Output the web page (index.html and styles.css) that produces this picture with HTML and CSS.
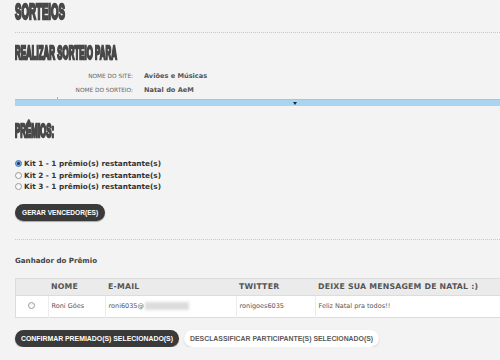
FILE: index.html
```html
<!DOCTYPE html>
<html lang="pt-BR">
<head>
    <meta charset="UTF-8">
    <meta name="viewport" content="width=device-width, initial-scale=1.0">
    <title>Sorteios</title>
    <link rel="stylesheet" href="styles.css">
</head>
<body>
    <div class="page">
        <div class="page-title">
            <h1 class="gothic big">SORTEIOS</h1>
        </div>

        <h2 class="gothic">REALIZAR SORTEIO PARA</h2>
        <div class="info">
            <div class="info-label">NOME DO SITE:</div>
            <div class="info-value">Aviões e Músicas</div>
            <div class="info-label">NOME DO SORTEIO:</div>
            <div class="info-value">Natal do AeM</div>
        </div>
        <div class="select-bar"><span class="caret"></span></div>

        <h2 class="gothic prizes-title">PRÊMIOS:</h2>
        <div class="prizes">
            <label class="prize"><input type="radio" name="kit" checked> Kit 1 - 1 prêmio(s) restantante(s)</label>
            <label class="prize"><input type="radio" name="kit"> Kit 2 - 1 prêmio(s) restantante(s)</label>
            <label class="prize"><input type="radio" name="kit"> Kit 3 - 1 prêmio(s) restantante(s)</label>
        </div>
        <button class="btn dark">GERAR VENCEDOR(ES)</button>

        <div class="winner">
            <div class="winner-title">Ganhador do Prêmio</div>
            <table class="winners">
                <thead>
                    <tr>
                        <th class="col-pick"></th>
                        <th class="col-name">NOME</th>
                        <th class="col-mail">E-MAIL</th>
                        <th class="col-tw">TWITTER</th>
                        <th>DEIXE SUA MENSAGEM DE NATAL :)</th>
                    </tr>
                </thead>
                <tbody>
                    <tr>
                        <td class="col-pick"><input type="radio" name="winner"></td>
                        <td>Roni Góes</td>
                        <td>roni6035@<span class="hidden-mail"></span></td>
                        <td>ronigoes6035</td>
                        <td>Feliz Natal pra todos!!</td>
                    </tr>
                </tbody>
            </table>
            <div class="actions">
                <button class="btn dark">CONFIRMAR PREMIADO(S) SELECIONADO(S)</button>
                <button class="btn light">DESCLASSIFICAR PARTICIPANTE(S) SELECIONADO(S)</button>
            </div>
        </div>
    </div>
</body>
</html>
```

FILE: styles.css
```css
/* Global */
body {
    margin: 0;
    background: #f3f3f3;
    color: #444;
    font-family: "DejaVu Sans", Verdana, sans-serif;
    overflow: hidden;
}

button {
    font-family: inherit;
    border: none;
    outline: none;
    cursor: pointer;
}

.page {
    padding: 1px 0 0 15px;
}

/* Headings */
.gothic {
    margin: 0;
    font-family: "Liberation Sans", Arial, sans-serif;
    font-weight: bold;
    color: #484848;
    display: inline-block;
    transform: scaleX(0.44);
    transform-origin: left center;
    -webkit-text-stroke: 2.4px #484848;
    white-space: nowrap;
}

h2.gothic {
    display: block;
    margin-top: 11px;
    font-size: 18px;
    line-height: 18px;
    height: 18px;
    width: 240px;
}

.big {
    font-size: 22px;
    line-height: 22px;
    height: 22px;
}

.page-title {
    padding-bottom: 9px;
    border-bottom: 1px dotted #c8c8c8;
}

/* Site info */
.info {
    display: grid;
    grid-template-columns: 118px auto;
    column-gap: 11px;
    margin-top: 7px;
}

.info-label,
.info-value {
    height: 14px;
    line-height: 14px;
}

.info-label {
    text-align: right;
    font-size: 5.8px;
    color: #666;
}

.info-value {
    font-size: 6.6px;
    font-weight: bold;
    color: #555;
}

.select-bar {
    position: relative;
    display: flex;
    align-items: center;
    height: 7px;
    margin-top: 2px;
    background: #a9d5f1;
    border-top: 1px solid #9cc8e6;
    box-sizing: border-box;
}

.select-bar::before {
    content: "";
    position: absolute;
    left: 42px;
    top: -3px;
    width: 1px;
    height: 2px;
    background: #aaa;
}

.caret {
    margin-left: 278px;
    width: 0;
    height: 0;
    border-left: 2.5px solid transparent;
    border-right: 2.5px solid transparent;
    border-top: 3px solid #1d2a44;
}

/* Prizes */
h2.prizes-title {
    margin-top: 16px;
}

.prizes {
    margin-top: 18px;
}

.prize {
    display: flex;
    align-items: center;
    gap: 2px;
    height: 11.5px;
    font-size: 7.3px;
    font-weight: bold;
    color: #333;
}

input[type="radio"] {
    appearance: none;
    -webkit-appearance: none;
    margin: 0;
    width: 7px;
    height: 7px;
    border-radius: 50%;
    border: 1px solid #9a9a9a;
    background: linear-gradient(#f4f4f4, #ffffff);
    box-sizing: border-box;
}

input[type="radio"]:checked {
    border-color: #3a6fb4;
    background: radial-gradient(circle, #1f3e6a 0 1.3px, #6ea8e6 1.6px, #a6cdf3 100%);
}

/* Buttons */
.btn {
    height: 17px;
    padding: 0 6px;
    border-radius: 9px;
    font-family: "Liberation Sans", Arial, sans-serif;
    font-weight: bold;
    font-size: 6.9px;
    white-space: nowrap;
}

.btn.dark {
    background: #3a3a3a;
    color: #fff;
    box-shadow: 0 1px 1px rgba(0, 0, 0, 0.3);
}

.btn.light {
    background: #fff;
    color: #5a5a5a;
    box-shadow: 0 1px 2px rgba(0, 0, 0, 0.15);
}

.prizes + .btn {
    margin-top: 11px;
    padding: 0 7px;
    font-size: 6.6px;
}

/* Winner */
.winner {
    margin-top: 18px;
    border-top: 1px dotted #c8c8c8;
}

.winner-title {
    margin-top: 16px;
    font-size: 7.1px;
    line-height: 10px;
    font-weight: bold;
    color: #444;
}

.winners {
    width: 100%;
    margin-top: 12px;
    border-collapse: collapse;
    border: 1px solid #dcdcdc;
    border-right: none;
    table-layout: fixed;
}

.winners th {
    height: 16px;
    padding: 0 3px;
    background: #ebebeb;
    text-align: left;
    font-size: 7.8px;
    letter-spacing: 0.2px;
    color: #555;
    border-bottom: 1px solid #dcdcdc;
}

.winners td {
    height: 21px;
    padding: 0 3px;
    background: #fff;
    font-size: 6.5px;
    color: #555;
    border-left: 1px solid #ececec;
}

.winners td:first-child {
    border-left: none;
    text-align: center;
}

.col-pick { width: 26px; }
.col-name { width: 51px; }
.col-mail { width: 125px; }
.col-tw { width: 73px; }

.hidden-mail {
    display: inline-block;
    vertical-align: middle;
    width: 44px;
    height: 8px;
    margin-left: 1px;
    background: #dcdcdc;
    filter: blur(1.5px);
}

.actions {
    display: flex;
    gap: 5px;
    margin-top: 12px;
}
```
